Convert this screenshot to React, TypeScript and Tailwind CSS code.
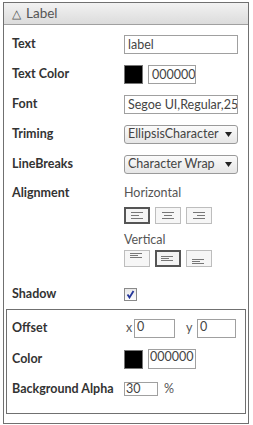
import React from "react";

const labelCls = "w-[112px] shrink-0 text-[12.5px] font-bold text-[#333]";
const inputCls =
  "h-[19px] border border-[#a0a0a0] bg-white px-[3px] text-[12.5px] leading-[17px] text-[#444] overflow-hidden whitespace-nowrap";

function Row({ label, children, className = "" }: { label: string; children: React.ReactNode; className?: string }) {
  return (
    <div className={`flex items-center ${className}`}>
      <div className={labelCls}>{label}</div>
      {children}
    </div>
  );
}

function Select({ value }: { value: string }) {
  return (
    <div className="flex h-[19px] w-[114px] items-center justify-between rounded-[3px] border border-[#9a9a9a] bg-gradient-to-b from-[#fbfbfb] to-[#e6e6e6] pl-[3px] pr-[5px] text-[12.5px] text-[#444]">
      <span className="whitespace-nowrap">{value}</span>
      <svg width="7" height="5" viewBox="0 0 7 5">
        <path d="M0 0 L7 0 L3.5 5 Z" fill="#222" />
      </svg>
    </div>
  );
}

type Align = "left" | "center" | "right";

function HIcon({ align }: { align: Align }) {
  const lines = [12, 8, 12];
  return (
    <svg width="14" height="9" viewBox="0 0 14 9">
      {lines.map((w, i) => {
        const x = align === "left" ? 1 : align === "center" ? 1 + (12 - w) / 2 : 13 - w;
        return <rect key={i} x={x} y={i * 3 + 1} width={w} height="1" fill="#777" />;
      })}
    </svg>
  );
}

function VIcon({ pos }: { pos: "top" | "middle" | "bottom" }) {
  const lines = [12, 8, 12];
  const off = pos === "top" ? 0 : pos === "middle" ? 3 : 6;
  return (
    <svg width="16" height="13" viewBox="0 0 16 13">
      {lines.map((w, i) => (
        <rect key={i} x={1} y={i * 2 + 1 + off} width={w} height="1" fill="#777" />
      ))}
    </svg>
  );
}

function AlignBtn({ selected, children }: { selected?: boolean; children: React.ReactNode }) {
  return (
    <div
      className={`flex h-[17px] w-[26px] items-center justify-center ${
        selected ? "border-2 border-[#555] bg-[#f4f4f4]" : "border border-[#bdbdbd] bg-[#f6f6f6]"
      }`}
    >
      {children}
    </div>
  );
}

export default function App() {
  return (
    <div className="flex h-[425px] w-[253px] flex-col bg-white font-['Lato','Noto_Sans',sans-serif]">
      <div className="ml-[3px] mt-[2px] w-[246px] border border-[#707070]">
        {/* header */}
        <div className="flex h-[22px] items-center border-b border-[#a0a0a0] bg-gradient-to-b from-[#f2f2f2] to-[#dcdcdc] pl-[8px] text-[13.5px] text-[#555]">
          <span className="mr-[5px] text-[12px]">△</span>
          <span>Label</span>
        </div>

        <div className="pl-[8px] pt-[10px]">
          <div className="flex flex-col gap-[11px]">
            <Row label="Text">
              <div className={`${inputCls} w-[114px]`}>label</div>
            </Row>
            <Row label="Text Color">
              <div className="h-[19px] w-[19px] border border-[#777] bg-black" />
              <div className={`${inputCls} ml-[5px] w-[48px]`}>000000</div>
            </Row>
            <Row label="Font">
              <div className={`${inputCls} w-[114px] pr-0`}>Segoe UI,Regular,25pt</div>
            </Row>
            <Row label="Triming">
              <Select value="EllipsisCharacter" />
            </Row>
            <Row label="LineBreaks">
              <Select value="Character Wrap" />
            </Row>
          </div>

          {/* alignment */}
          <div className="mt-[11px] flex">
            <div className={`${labelCls} leading-[16px]`}>Alignment</div>
            <div className="flex flex-col">
              <div className="text-[12.5px] leading-[16px] text-[#555]">Horizontal</div>
              <div className="mt-[6px] flex gap-[5px]">
                <AlignBtn selected>
                  <HIcon align="left" />
                </AlignBtn>
                <AlignBtn>
                  <HIcon align="center" />
                </AlignBtn>
                <AlignBtn>
                  <HIcon align="right" />
                </AlignBtn>
              </div>
              <div className="mt-[8px] text-[12.5px] leading-[16px] text-[#555]">Vertical</div>
              <div className="mt-[2px] flex gap-[5px]">
                <AlignBtn>
                  <VIcon pos="top" />
                </AlignBtn>
                <AlignBtn selected>
                  <VIcon pos="middle" />
                </AlignBtn>
                <AlignBtn>
                  <VIcon pos="bottom" />
                </AlignBtn>
              </div>
            </div>
          </div>

          {/* shadow */}
          <Row label="Shadow" className="mt-[21px] h-[13px]">
            <div className="flex h-[13px] w-[13px] items-center justify-center border border-[#8a8a8a] bg-gradient-to-b from-[#e8e8e8] to-[#fdfdfd]">
              <svg width="9" height="9" viewBox="0 0 9 9">
                <path d="M1.5 4.5 L3.5 7.5 L7.5 1" stroke="#24369a" strokeWidth="1.8" fill="none" />
              </svg>
            </div>
          </Row>
        </div>

        {/* shadow settings box */}
        <div className="mx-[2px] mb-[9px] mt-[8px] border border-[#707070] pb-[14px] pl-[5px] pt-[9px]">
          <div className="flex flex-col gap-[11px]">
            <Row label="Offset">
              <span className="ml-[2px] w-[8px] text-[12.5px] text-[#555]">x</span>
              <div className="h-[19px] w-[41px] border border-[#a0a0a0] pl-[2px] text-[12.5px] leading-[13px] text-[#444]">0</div>
              <span className="ml-[11px] w-[11px] text-[12.5px] text-[#555]">y</span>
              <div className="h-[19px] w-[39px] border border-[#a0a0a0] pl-[2px] text-[12.5px] leading-[13px] text-[#444]">0</div>
            </Row>
            <Row label="Color">
              <div className="h-[19px] w-[19px] border border-[#777] bg-black" />
              <div className="ml-[5px] h-[20px] w-[48px] border border-[#a0a0a0] pl-[1px] text-[12.5px] leading-[13px] text-[#444]">000000</div>
            </Row>
            <Row label="Background Alpha">
              <div className="h-[14px] w-[34px] border border-[#a0a0a0] pl-[1px] text-[12.5px] leading-[12px] text-[#444]">30</div>
              <span className="ml-[6px] text-[12.5px] text-[#555]">%</span>
            </Row>
          </div>
        </div>
      </div>
      <div className="mt-[5px] flex-1 bg-[#f0f0f0]" />
    </div>
  );
}
